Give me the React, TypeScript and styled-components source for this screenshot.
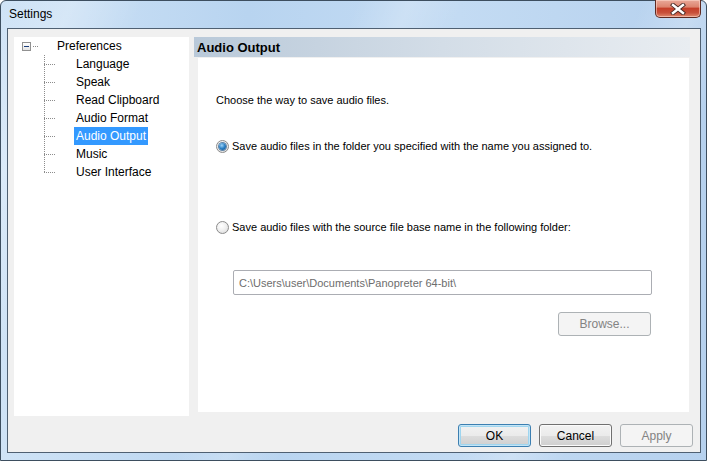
import React from "react"
import styled, { createGlobalStyle } from "styled-components"

const GlobalStyle = createGlobalStyle`
  html, body {
    margin: 0;
    padding: 0;
    width: 707px;
    height: 461px;
    overflow: hidden;
    background: #ffffff;
  }
  * {
    box-sizing: border-box;
  }
`

const UI_FONT = `"Liberation Sans", Arial, sans-serif`

const Window = styled.div`
  width: 707px;
  height: 461px;
  display: flex;
  flex-direction: column;
  border: 1px solid #3d4e5f;
  border-radius: 6px 6px 0 0;
  background:
    linear-gradient(
      112deg,
      rgba(255, 255, 255, 0) 0%,
      rgba(255, 255, 255, 0.25) 8%,
      rgba(255, 255, 255, 0) 16%,
      rgba(255, 255, 255, 0) 40%,
      rgba(255, 255, 255, 0.2) 46%,
      rgba(255, 255, 255, 0) 52%,
      rgba(255, 255, 255, 0) 72%,
      rgba(255, 255, 255, 0.22) 78%,
      rgba(255, 255, 255, 0) 84%
    ),
    linear-gradient(to right, #cfe3f6 0%, #b8d4f0 35%, #c3dbf3 65%, #b6d1ee 100%);
  font-family: ${UI_FONT};
`

const TitleBar = styled.div`
  height: 27px;
  display: flex;
  align-items: flex-start;
  justify-content: space-between;
  padding-left: 8px;
`

const Title = styled.span`
  font-size: 12px;
  line-height: 27px;
  color: #000;
`

const CloseButton = styled.div`
  width: 46px;
  height: 18px;
  margin-right: 5px;
  margin-top: -1px;
  border: 1px solid #5e2a22;
  border-top: none;
  border-radius: 0 0 5px 5px;
  background: linear-gradient(
    to bottom,
    #e9a999 0%,
    #dd8570 40%,
    #c5402a 50%,
    #c8503a 75%,
    #e08a6f 100%
  );
  box-shadow: inset 0 0 0 1px rgba(255, 220, 210, 0.55);
  display: flex;
  align-items: center;
  justify-content: center;
`

const Client = styled.div`
  flex: 1;
  margin: 0 5px 7px 6px;
  border: 1px solid #4f6072;
  background: #f0f0f0;
  display: flex;
  flex-direction: column;
  padding: 8px 6px 0 6px;
`

const Body = styled.div`
  height: 379px;
  display: flex;
  gap: 5px;
`

const Tree = styled.div`
  width: 175px;
  background: #ffffff;
  display: flex;
  flex-direction: column;
  font-size: 12px;
  color: #000;
`

const RootRow = styled.div`
  height: 18px;
  display: flex;
  align-items: center;
  padding-left: 8px;
`

const Expander = styled.span`
  width: 9px;
  height: 9px;
  border: 1px solid #919191;
  background: linear-gradient(to bottom, #ffffff, #e3e3e3);
  display: flex;
  align-items: center;
  justify-content: center;
  flex-shrink: 0;

  &::after {
    content: "";
    width: 5px;
    height: 1px;
    background: #1b3d7a;
  }
`

const RootDots = styled.span`
  width: 5px;
  height: 1px;
  margin-left: 2px;
  background: repeating-linear-gradient(to right, #8c8c8c 0 1px, transparent 1px 2px);
`

const RootLabel = styled.span`
  margin-left: 19px;
  line-height: 18px;
`

const ChildRow = styled.div`
  height: 18px;
  display: flex;
  align-items: center;
  padding-left: 30px;
`

const Connector = styled.span<{ $last?: boolean }>`
  width: 30px;
  height: 18px;
  flex-shrink: 0;
  background-image:
    repeating-linear-gradient(to bottom, #8c8c8c 0 1px, transparent 1px 2px),
    repeating-linear-gradient(to right, #8c8c8c 0 1px, transparent 1px 2px);
  background-repeat: no-repeat;
  background-size: 1px ${({ $last }) => ($last ? "10px" : "18px")}, 12px 1px;
  background-position: 0 0, 0 9px;
`

const ChildLabel = styled.span<{ $selected?: boolean }>`
  height: 18px;
  line-height: 18px;
  padding: 0 2px;
  background: ${({ $selected }) => ($selected ? "#3399ff" : "transparent")};
  color: ${({ $selected }) => ($selected ? "#ffffff" : "#000000")};
`

const RightColumn = styled.div`
  width: 496px;
  display: flex;
  flex-direction: column;
`

const PageHeader = styled.div`
  height: 20px;
  padding-left: 3px;
  display: flex;
  align-items: center;
  background: linear-gradient(to right, #b9c9d9 0%, #d3dde7 50%, #e9edf1 100%);
  font-size: 13px;
  font-weight: bold;
  color: #000;
`

const Page = styled.div`
  margin: 1px 0 0 4px;
  width: 491px;
  height: 354px;
  background: #ffffff;
  display: flex;
  flex-direction: column;
  font-size: 11px;
  color: #000;
`

const Prompt = styled.div`
  margin: 35px 0 0 18px;
  height: 14px;
  line-height: 14px;
`

const RadioRow = styled.label<{ $top: number }>`
  margin: ${({ $top }) => $top}px 0 0 18px;
  height: 14px;
  display: flex;
  align-items: center;
  gap: 3px;
  line-height: 14px;
`

const RadioCircle = styled.span<{ $checked?: boolean }>`
  width: 13px;
  height: 13px;
  border-radius: 50%;
  border: 1px solid #8b8b8b;
  background: radial-gradient(circle at 40% 35%, #ffffff 0%, #f0f0f0 45%, #d6d6d6 100%);
  display: flex;
  align-items: center;
  justify-content: center;
  flex-shrink: 0;

  &::after {
    content: "";
    display: ${({ $checked }) => ($checked ? "block" : "none")};
    width: 7px;
    height: 7px;
    border-radius: 50%;
    background: radial-gradient(circle at 40% 35%, #9fd4f7 0%, #2a7fc4 50%, #0e4a84 100%);
    box-shadow: 0 0 0 1px #5e84a8;
  }
`

const PathField = styled.div`
  margin: 36px 0 0 35px;
  width: 419px;
  height: 25px;
  border: 1px solid #abadb3;
  border-radius: 2px;
  padding-left: 5px;
  display: flex;
  align-items: center;
  font-size: 11px;
  color: #6d6d6d;
  background: #ffffff;
`

const Button = styled.button<{ $variant?: "default" | "normal" | "disabled" }>`
  width: 73px;
  height: 23px;
  border-radius: 3px;
  font-family: ${UI_FONT};
  font-size: 12px;
  padding: 0;
  border: 1px solid
    ${({ $variant }) =>
      $variant === "default" ? "#3c7fb1" : $variant === "disabled" ? "#adb2b5" : "#707070"};
  color: ${({ $variant }) => ($variant === "disabled" ? "#838383" : "#000000")};
  background: ${({ $variant }) =>
    $variant === "disabled"
      ? "#f4f4f4"
      : "linear-gradient(to bottom, #f2f2f2 0%, #ebebeb 50%, #dddddd 51%, #cfcfcf 100%)"};
  box-shadow: ${({ $variant }) =>
    $variant === "default"
      ? "inset 0 0 0 1px #c4e5f6, inset 0 0 0 2px #9fd5ef"
      : $variant === "disabled"
      ? "none"
      : "inset 0 0 0 1px #fbfbfb"};
`

const BrowseButton = styled(Button)`
  width: 93px;
  height: 24px;
  margin: 17px 0 0 360px;
`

const Footer = styled.div`
  margin-top: 8px;
  margin-right: 1px;
  display: flex;
  justify-content: flex-end;
  gap: 8px;
`

const treeItems = [
  "Language",
  "Speak",
  "Read Clipboard",
  "Audio Format",
  "Audio Output",
  "Music",
  "User Interface",
]

const CloseGlyph = () => (
  <svg width="16" height="12" viewBox="0 0 16 12">
    <path d="M3 2 L13 10 M13 2 L3 10" stroke="#4a2a26" strokeWidth="4.2" strokeLinecap="square" />
    <path d="M3 2 L13 10 M13 2 L3 10" stroke="#ffffff" strokeWidth="2.4" strokeLinecap="square" />
  </svg>
)

export default function App() {
  const selected = "Audio Output"
  return (
    <>
      <GlobalStyle />
      <Window>
        <TitleBar>
          <Title>Settings</Title>
          <CloseButton>
            <CloseGlyph />
          </CloseButton>
        </TitleBar>
        <Client>
          <Body>
            <Tree>
              <RootRow>
                <Expander />
                <RootDots />
                <RootLabel>Preferences</RootLabel>
              </RootRow>
              {treeItems.map((item, i) => (
                <ChildRow key={item}>
                  <Connector $last={i === treeItems.length - 1} />
                  <ChildLabel $selected={item === selected}>{item}</ChildLabel>
                </ChildRow>
              ))}
            </Tree>
            <RightColumn>
              <PageHeader>Audio Output</PageHeader>
              <Page>
                <Prompt>Choose the way to save audio files.</Prompt>
                <RadioRow $top={32}>
                  <RadioCircle $checked />
                  Save audio files in the folder you specified with the name you assigned to.
                </RadioRow>
                <RadioRow $top={67}>
                  <RadioCircle />
                  Save audio files with the source file base name in the following folder:
                </RadioRow>
                <PathField>C:\Users\user\Documents\Panopreter 64-bit\</PathField>
                <BrowseButton $variant="disabled">Browse...</BrowseButton>
              </Page>
            </RightColumn>
          </Body>
          <Footer>
            <Button $variant="default">OK</Button>
            <Button $variant="normal">Cancel</Button>
            <Button $variant="disabled">Apply</Button>
          </Footer>
        </Client>
      </Window>
    </>
  )
}
